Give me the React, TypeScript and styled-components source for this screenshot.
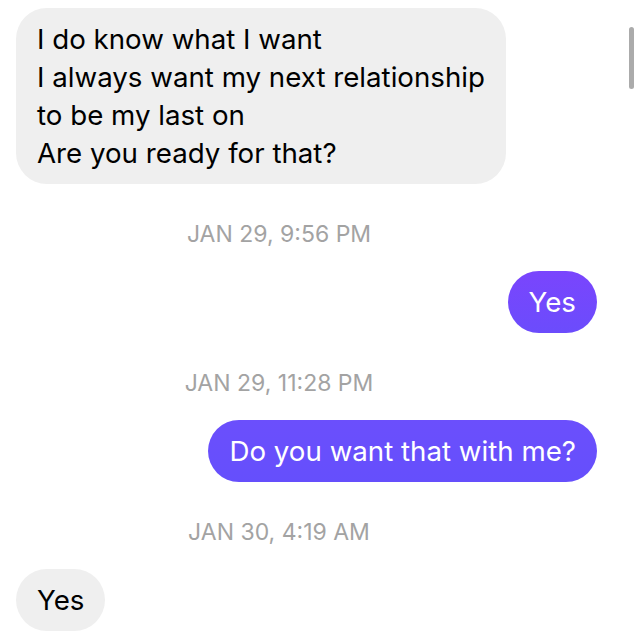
import React from "react";
import styled, { createGlobalStyle } from "styled-components";

const GlobalStyle = createGlobalStyle`
	html, body {
		margin: 0;
		padding: 0;
		background: #ffffff;
	}
	body {
		font-family: Inter, "Noto Sans", "Liberation Sans", sans-serif;
		-webkit-font-smoothing: antialiased;
	}
`;

const Thread = styled("div")`
	position: relative;
	width: 640px;
	height: 636px;
	overflow: hidden;
	box-sizing: border-box;
	padding: 8px 43px 0 16px;
	display: flex;
	flex-direction: column;
	background-color: #ffffff;
`;

const ScrollThumb = styled("div")`
	position: absolute;
	top: 27px;
	right: 6px;
	width: 5px;
	height: 62px;
	border-radius: 3px;
	background-color: #ababab;
`;

const Row = styled("div")<{ $mine?: boolean }>`
	display: flex;
	justify-content: ${(p) => (p.$mine ? "flex-end" : "flex-start")};
`;

const Bubble = styled("div")<{ $tint?: string }>`
	padding: 12px 21px;
	border-radius: 31px;
	font-size: 27.7px;
	line-height: 38px;
	white-space: pre-line;
	color: ${(p) => (p.$tint ? "#ffffff" : "#000000")};
	background: ${(p) => p.$tint || "#efefef"};
`;

const Stamp = styled("div")`
	margin: 38px 0 25px;
	padding-right: 55px;
	text-align: center;
	font-size: 23px;
	line-height: 24px;
	color: #a3a3a3;
`;

type Msg =
	| { kind: "time"; text: string }
	| { kind: "msg"; text: string; mine?: boolean; tint?: string };

const messages: Msg[] = [
	{
		kind: "msg",
		text: "I do know what I want\nI always want my next relationship\nto be my last on\nAre you ready for that?",
	},
	{ kind: "time", text: "JAN 29, 9:56 PM" },
	{ kind: "msg", text: "Yes", mine: true, tint: "linear-gradient(180deg, #7a45fd, #6b4cfc)" },
	{ kind: "time", text: "JAN 29, 11:28 PM" },
	{
		kind: "msg",
		text: "Do you want that with me?",
		mine: true,
		tint: "linear-gradient(180deg, #6b4ffc, #654ffc)",
	},
	{ kind: "time", text: "JAN 30, 4:19 AM" },
	{ kind: "msg", text: "Yes" },
];

export default function App() {
	return (
		<>
			<GlobalStyle />
			<Thread>
				{messages.map((m, index) =>
					m.kind === "time" ? (
						<Stamp key={index}>{m.text}</Stamp>
					) : (
						<Row key={index} $mine={m.mine}>
							<Bubble $tint={m.tint}>{m.text}</Bubble>
						</Row>
					)
				)}
				<ScrollThumb />
			</Thread>
		</>
	);
}
